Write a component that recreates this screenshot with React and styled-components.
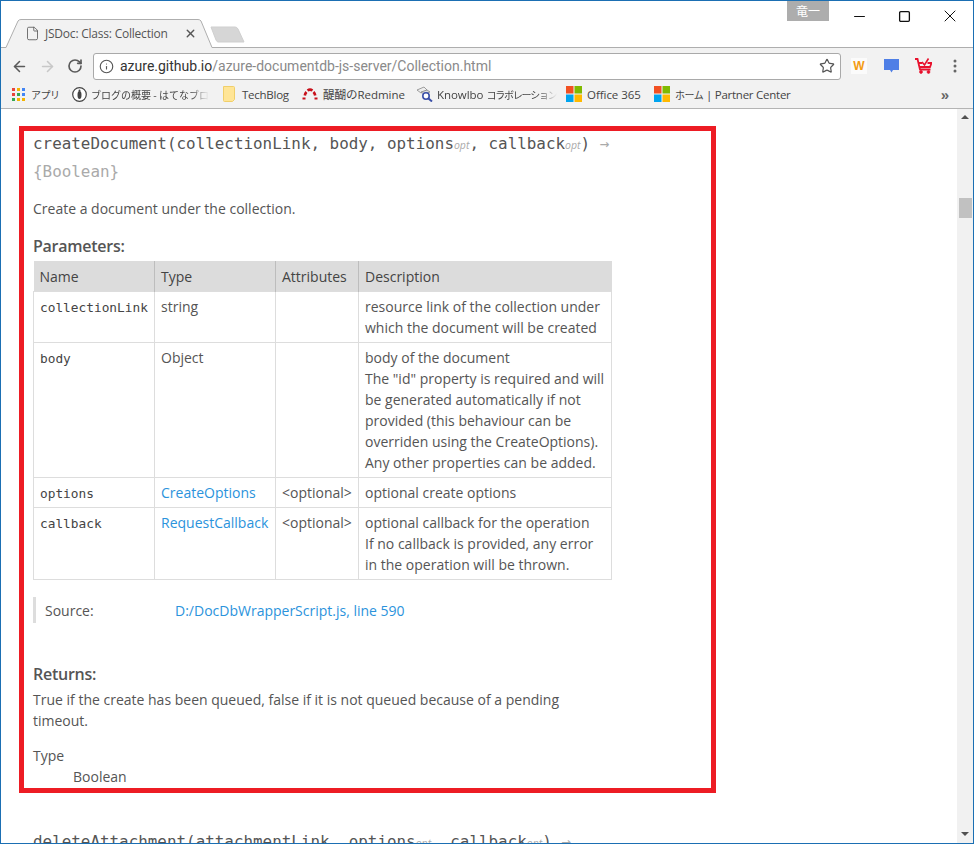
import React from "react";
import styled, { createGlobalStyle } from "styled-components";
import { ArrowLeft, ArrowRight, RotateCw, Info, Star, X, Minus, Square, File } from "lucide-react";

const GlobalStyle = createGlobalStyle`
  html, body {
    margin: 0;
    padding: 0;
    overflow: hidden;
    background: #fff;
  }
`;

const CJK = `"Noto Sans CJK JP"`;

const Frame = styled.div`
  box-sizing: border-box;
  width: 974px;
  height: 844px;
  border: 1px solid #1b6fb3;
  display: flex;
  flex-direction: column;
  overflow: hidden;
  font-family: "Open Sans", ${CJK}, sans-serif;
  color: #555;
`;

const TitleBar = styled.div`
  position: relative;
  height: 46px;
  flex: none;
  display: flex;
  align-items: flex-end;
  padding-left: 4px;
  background: #fff;
`;

const Tab = styled.div`
  position: relative;
  width: 208px;
  height: 29px;
  flex: none;
  display: flex;
  align-items: center;
  padding: 0 0 0 20px;
  box-sizing: border-box;
  margin-bottom: -1px;
  z-index: 1;
  color: #555;
  font-size: 12px;
  letter-spacing: -0.22px;
`;

const TabShape = styled.svg`
  position: absolute;
  left: 0;
  top: 0;
`;

const TabLabel = styled.span`
  position: relative;
  margin-left: 5px;
  width: 139px;
`;

const TabIcon = styled(File)`
  position: relative;
  flex: none;
`;

const TabClose = styled(X)`
  position: relative;
  flex: none;
  color: #555;
`;

const NewTab = styled.svg`
  flex: none;
  margin: 0 0 3px -3px;
`;

const WindowControls = styled.div`
  position: absolute;
  top: 0;
  right: 1px;
  display: flex;
  align-items: flex-start;
`;

const UserBadge = styled.div`
  width: 42px;
  height: 20px;
  margin-right: 8px;
  background: #adadad;
  color: #fff;
  font-size: 12px;
  line-height: 20px;
  text-align: center;
  font-family: ${CJK}, sans-serif;
`;

const ControlButton = styled.div`
  width: 45px;
  height: 30px;
  display: flex;
  align-items: center;
  justify-content: center;
  color: #111;
`;

const Toolbar = styled.div`
  height: 33px;
  flex: none;
  box-sizing: border-box;
  border-top: 1px solid #aeaeae;
  padding-top: 4px;
  background: #f2f2f2;
  display: flex;
  align-items: center;
`;

const NavButton = styled.div`
  width: 28px;
  display: flex;
  justify-content: center;
  color: ${(p) => (p.$disabled ? "#c8c8c8" : "#5a5a5a")};
  margin-left: ${(p) => (p.$first ? "4px" : "0")};
`;

const Omnibox = styled.div`
  box-sizing: border-box;
  width: 748px;
  height: 27px;
  margin-left: 4px;
  background: #fff;
  border: 1px solid #a9a9a9;
  border-radius: 3px;
  display: flex;
  align-items: center;
  padding: 0 5px;
  font-family: "Roboto", sans-serif;
  font-size: 14px;
  color: #333;
`;

const UrlIcon = styled(Info)`
  flex: none;
  margin-right: 6px;
  color: #555;
`;

const Url = styled.div`
  flex: 1;
  white-space: nowrap;
`;

const UrlPath = styled.span`
  color: #8a8a8a;
`;

const ExtButton = styled.div`
  width: 32px;
  display: flex;
  justify-content: center;
  margin-left: ${(p) => (p.$first ? "2px" : "0")};
`;

const WBadge = styled.div`
  width: 16px;
  height: 16px;
  background: #fbfbfb;
  color: #f39c12;
  font-family: "Liberation Sans", sans-serif;
  font-weight: 700;
  font-size: 12px;
  line-height: 16px;
  text-align: center;
`;

const BookmarkBar = styled.div`
  height: 29px;
  flex: none;
  box-sizing: border-box;
  border-bottom: 1px solid #b4b4b4;
  background: #f2f2f2;
  display: flex;
  align-items: center;
  padding-left: 11px;
  font-size: 11.5px;
  color: #444;
  letter-spacing: -0.05px;
`;

const Bookmark = styled.div`
  width: ${(p) => p.$w}px;
  flex: none;
  display: flex;
  align-items: center;
  gap: ${(p) => p.$gap || 5}px;
  white-space: nowrap;

  svg {
    flex: none;
  }
`;

const BookmarkText = styled.span`
  display: block;
  letter-spacing: ${(p) => p.$spacing || "inherit"};
  ${(p) => p.$fade && `
    -webkit-mask-image: linear-gradient(to right, #000 85%, transparent);
    mask-image: linear-gradient(to right, #000 85%, transparent);
  `}
`;

const Jp = styled.span`
  font-family: ${CJK}, sans-serif;
  font-size: ${(p) => p.$size || "10px"};
  letter-spacing: ${(p) => p.$spacing || "-0.5px"};
`;

const Chevron = styled.div`
  margin-left: auto;
  margin-right: 24px;
  font-family: "Liberation Sans", sans-serif;
  font-size: 15px;
  font-weight: 700;
  color: #666;
  line-height: 1;
`;

const Viewport = styled.div`
  flex: 1;
  min-height: 0;
  display: flex;
`;

const Page = styled.main`
  flex: 1;
  min-width: 0;
  overflow: hidden;
  padding: 17px 0 0 18px;
  font-size: 14px;
  line-height: 21px;
  background: #fff;
`;

const Scrollbar = styled.div`
  width: 16px;
  flex: none;
  background: #f1f1f1;
  display: flex;
  flex-direction: column;
  align-items: center;
  padding-top: 6px;
  box-sizing: border-box;
`;

const ScrollArrow = styled.div`
  width: 0;
  height: 0;
  border-left: 4px solid transparent;
  border-right: 4px solid transparent;
  border-${(p) => (p.$down ? "top" : "bottom")}: 4px solid #505050;
  margin-top: ${(p) => (p.$down ? "614px" : "0")};
`;

const Thumb = styled.div`
  width: 13px;
  height: 20px;
  margin-top: 79px;
  background: #c1c1c1;
`;

const Highlight = styled.section`
  box-sizing: border-box;
  width: 697px;
  height: 667px;
  border: 5px solid #ed1c24;
  padding: 0 0 0 9px;
`;

const Signature = styled.h4`
  margin: -1px 0 0;
  width: 590px;
  font-family: "DejaVu Sans Mono", monospace;
  font-weight: 400;
  font-size: 15.9px;
  line-height: 28px;
  color: #555;
`;

const Opt = styled.span`
  font-family: "Open Sans", sans-serif;
  font-style: italic;
  font-size: 10.5px;
  line-height: 1;
  color: #aaa;
`;

const Muted = styled.span`
  color: #aaa;
`;

const Paragraph = styled.p`
  margin: ${(p) => p.$m || "0"};
  width: 579px;
`;

const SubHeading = styled.h5`
  margin: ${(p) => p.$m || "0"};
  font-size: 16px;
  line-height: 21px;
  font-weight: 600;
  color: #555;
  letter-spacing: -0.25px;
`;

const ParamTable = styled.table`
  border-collapse: collapse;
  table-layout: fixed;
  width: 578px;
  margin-top: 4px;
`;

const HeadCell = styled.th`
  background: #dcdcdc;
  border-right: 1px solid ${(p) => (p.$last ? "#dcdcdc" : "#bdbdbd")};
  padding: 5px 6px 4px;
  font-weight: 400;
  text-align: left;
  height: 21px;
  color: #444;
`;

const Cell = styled.td`
  border: 1px solid #ddd;
  padding: 4px 6px;
  vertical-align: top;
`;

const Code = styled.code`
  font-family: "DejaVu Sans Mono", monospace;
  font-size: 12.8px;
  line-height: 1;
  color: #444;
`;

const Anchor = styled.a`
  color: #2b93dc;
  text-decoration: none;
`;

const SourceRow = styled.div`
  display: flex;
  height: 26px;
  align-items: center;
  margin-top: 17px;
  border-left: 3px solid #ddd;
  padding-left: 9px;
`;

const SourceLabel = styled.span`
  width: 130px;
`;

const TypeValue = styled.div`
  margin-left: 40px;
`;

const NextSignature = styled(Signature)`
  margin: 35px 0 0 14px;
  width: auto;
  white-space: nowrap;
`;

const Chat = () => (
  <svg width="15" height="14" viewBox="0 0 15 14">
    <path d="M0 0h15v11H9l-1.500 2.500L6 11H0z" fill="#4f7fe6" />
  </svg>
);

const Cart = () => (
  <svg width="17" height="16" viewBox="0 0 17 16" fill="none" stroke="#e8112d" strokeWidth="1.800">
    <path d="M0 1h2.500L5 11.500h10.500" />
    <path d="M3.500 5H7M12.500 5H16.500l-1.500 4H5" />
    <circle cx="6" cy="14" r="1.400" fill="#e8112d" strokeWidth="0.800" />
    <circle cx="13.500" cy="14" r="1.400" fill="#e8112d" strokeWidth="0.800" />
    <path d="M7 4l2.500 3L13.500 .500" strokeWidth="1.600" />
  </svg>
);

const Dots = () => (
  <svg width="4" height="14" viewBox="0 0 4 14" fill="#666">
    <circle cx="2" cy="2" r="1.500" />
    <circle cx="2" cy="7" r="1.500" />
    <circle cx="2" cy="12" r="1.500" />
  </svg>
);

const AppsIcon = () => {
  const colors = ["#e8453c", "#f4b400", "#4285f4", "#e8453c", "#34a853", "#4285f4", "#34a853", "#f4b400", "#f4b400"];
  return (
    <svg width="13" height="13" viewBox="0 0 13 13">
      {colors.map((c, i) => (
        <rect key={i} x={(i % 3) * 5} y={Math.floor(i / 3) * 5} width="3" height="3" fill={c} />
      ))}
    </svg>
  );
};

const HatenaIcon = () => (
  <svg width="15" height="15" viewBox="0 0 15 15">
    <circle cx="7.500" cy="7.500" r="6.800" fill="#fff" stroke="#444" strokeWidth="1.200" />
    <ellipse cx="7.500" cy="8" rx="2" ry="4" fill="#444" />
    <circle cx="7.500" cy="3.500" r="1" fill="#444" />
  </svg>
);

const FolderIcon = () => (
  <svg width="12" height="16" viewBox="0 0 12 16">
    <path d="M.500.500h10a1 1 0 0 1 1 1v12l-2 2h-8a1 1 0 0 1-1-1z" fill="#ffe596" stroke="#f0cf6a" />
  </svg>
);

const RedmineIcon = () => (
  <svg width="16" height="12" viewBox="0 0 16 12" fill="none" stroke="#c8101a">
    <path d="M2 11.500V9.500" strokeWidth="3" />
    <path d="M14 11.500V9.500" strokeWidth="3" />
    <path d="M2.800 7.500A6 6 0 0 1 4.500 4" strokeWidth="2.600" />
    <path d="M13.200 7.500A6 6 0 0 0 11.500 4" strokeWidth="2.600" />
    <path d="M5.500 2.500Q8 .800 10.500 2.500" strokeWidth="2.600" />
  </svg>
);

const KnowlboIcon = () => (
  <svg width="17" height="16" viewBox="0 0 17 16">
    <path d="M1 4l7-3 3 3-6 3z" fill="#eee" stroke="#888" strokeWidth="0.800" />
    <path d="M5 6l6-2 3 2-6 2z" fill="#ddd" stroke="#888" strokeWidth="0.800" />
    <circle cx="10" cy="10" r="3.200" fill="#fff" stroke="#3a4fa8" strokeWidth="1.600" />
    <path d="M12.500 12.500 16 15.500" stroke="#3a4fa8" strokeWidth="2" />
  </svg>
);

const WindowsIcon = () => (
  <svg width="16" height="16" viewBox="0 0 16 16">
    <rect width="7.500" height="7.500" fill="#f25022" />
    <rect x="8.500" width="7.500" height="7.500" fill="#7fba00" />
    <rect y="8.500" width="7.500" height="7.500" fill="#00a4ef" />
    <rect x="8.500" y="8.500" width="7.500" height="7.500" fill="#ffb900" />
  </svg>
);

const rows = [
  {
    name: "collectionLink",
    type: "string",
    attrs: "",
    desc: ["resource link of the collection under which the document will be created"],
  },
  {
    name: "body",
    type: "Object",
    attrs: "",
    desc: [
      "body of the document",
      'The "id" property is required and will be generated automatically if not provided (this behaviour can be overriden using the CreateOptions). Any other properties can be added.',
    ],
  },
  { name: "options", type: "CreateOptions", link: true, attrs: "<optional>", desc: ["optional create options"] },
  {
    name: "callback",
    type: "RequestCallback",
    link: true,
    attrs: "<optional>",
    desc: ["optional callback for the operation", "If no callback is provided, any error in the operation will be thrown."],
  },
];

const bookmarks = [
  { id: "apps", w: 60, gap: 6, icon: <AppsIcon />, text: <Jp>アプリ</Jp> },
  { id: "hatena", w: 151, gap: 4, icon: <HatenaIcon />, fade: true, text: <Jp $spacing="0">ブログの概要 - はてなブロ</Jp> },
  { id: "tech", w: 79, gap: 7, spacing: "-0.25px", icon: <FolderIcon />, text: "TechBlog" },
  { id: "redmine", w: 114, icon: <RedmineIcon />, text: <><Jp $size="11.5px" $spacing="0">醍醐の</Jp>Redmine</> },
  { id: "knowlbo", w: 150, gap: 4, icon: <KnowlboIcon />, fade: true, text: <>Knowlbo <Jp $spacing="-1.2px">コラボレーション</Jp></> },
  { id: "office", w: 88, icon: <WindowsIcon />, text: "Office 365" },
  { id: "partner", w: 133, spacing: "-0.25px", icon: <WindowsIcon />, text: <><Jp>ホーム</Jp> | Partner Center</> },
];

export default function App() {
  return (
    <>
      <GlobalStyle />
      <Frame>
        <TitleBar>
          <Tab>
            <TabShape width="208" height="29" viewBox="0 0 208 29">
              <path d="M0 28.500H1L13 2Q14 .500 16 .500H193Q195 .500 196 2L207 28.500H208V29H0z" fill="#f2f2f2" stroke="none" />
              <path d="M0 28.500H1L13 2Q14 .500 16 .500H193Q195 .500 196 2L207 28.500H208" fill="none" stroke="#aeaeae" />
            </TabShape>
            <TabIcon size={15} strokeWidth={1.300} />
            <TabLabel>JSDoc: Class: Collection</TabLabel>
            <TabClose size={13} strokeWidth={2.500} />
          </Tab>
          <NewTab width="36" height="18" viewBox="0 0 36 18">
            <path d="M1 1H25Q27 1 28 3L34 16H8Q7 16 6 14z" fill="#d6d6d6" stroke="#cfcfcf" />
          </NewTab>
          <WindowControls>
            <UserBadge>竜一</UserBadge>
            <ControlButton><Minus size={17} strokeWidth={1} absoluteStrokeWidth /></ControlButton>
            <ControlButton><Square size={13} strokeWidth={1.300} absoluteStrokeWidth /></ControlButton>
            <ControlButton><X size={20} strokeWidth={1} absoluteStrokeWidth /></ControlButton>
          </WindowControls>
        </TitleBar>

        <Toolbar>
          <NavButton $first><ArrowLeft size={17} strokeWidth={2.200} /></NavButton>
          <NavButton $disabled><ArrowRight size={17} strokeWidth={2.200} /></NavButton>
          <NavButton><RotateCw size={16} strokeWidth={2.500} /></NavButton>
          <Omnibox>
            <UrlIcon size={15} strokeWidth={1.800} />
            <Url>azure.github.io<UrlPath>/azure-documentdb-js-server/Collection.html</UrlPath></Url>
            <Star size={16} strokeWidth={1.800} color="#555" />
          </Omnibox>
          <ExtButton $first><WBadge>W</WBadge></ExtButton>
          <ExtButton><Chat /></ExtButton>
          <ExtButton><Cart /></ExtButton>
          <ExtButton><Dots /></ExtButton>
        </Toolbar>

        <BookmarkBar>
          {bookmarks.map((b) => (
            <Bookmark key={b.id} $w={b.w} $gap={b.gap}>
              {b.icon}
              <BookmarkText $fade={b.fade} $spacing={b.spacing}>{b.text}</BookmarkText>
            </Bookmark>
          ))}
          <Chevron>»</Chevron>
        </BookmarkBar>

        <Viewport>
          <Page>
            <Highlight>
              <Signature>
                createDocument(collectionLink, body, options<Opt>opt</Opt>, callback<Opt>opt</Opt>) <Muted>→ {"{Boolean}"}</Muted>
              </Signature>
              <Paragraph $m="12px 0 0">Create a document under the collection.</Paragraph>
              <SubHeading $m="17px 0 0">Parameters:</SubHeading>
              <ParamTable>
                <colgroup>
                  <col width="121" />
                  <col width="121" />
                  <col width="83" />
                  <col width="253" />
                </colgroup>
                <thead>
                  <tr>
                    <HeadCell>Name</HeadCell>
                    <HeadCell>Type</HeadCell>
                    <HeadCell>Attributes</HeadCell>
                    <HeadCell $last>Description</HeadCell>
                  </tr>
                </thead>
                <tbody>
                  {rows.map((r) => (
                    <tr key={r.name}>
                      <Cell><Code>{r.name}</Code></Cell>
                      <Cell>{r.link ? <Anchor href="#">{r.type}</Anchor> : r.type}</Cell>
                      <Cell>{r.attrs}</Cell>
                      <Cell>
                        {r.desc.map((d) => (
                          <div key={d}>{d}</div>
                        ))}
                      </Cell>
                    </tr>
                  ))}
                </tbody>
              </ParamTable>
              <SourceRow>
                <SourceLabel>Source:</SourceLabel>
                <Anchor href="#">D:/DocDbWrapperScript.js, line 590</Anchor>
              </SourceRow>
              <SubHeading $m="41px 0 0">Returns:</SubHeading>
              <Paragraph $m="4px 0 0">True if the create has been queued, false if it is not queued because of a pending timeout.</Paragraph>
              <Paragraph $m="14px 0 0">Type</Paragraph>
              <TypeValue>Boolean</TypeValue>
            </Highlight>
            <NextSignature>
              deleteAttachment(attachmentLink, options<Opt>opt</Opt>, callback<Opt>opt</Opt>) <Muted>→</Muted>
            </NextSignature>
          </Page>
          <Scrollbar>
            <ScrollArrow />
            <Thumb />
            <ScrollArrow $down />
          </Scrollbar>
        </Viewport>
      </Frame>
    </>
  );
}
